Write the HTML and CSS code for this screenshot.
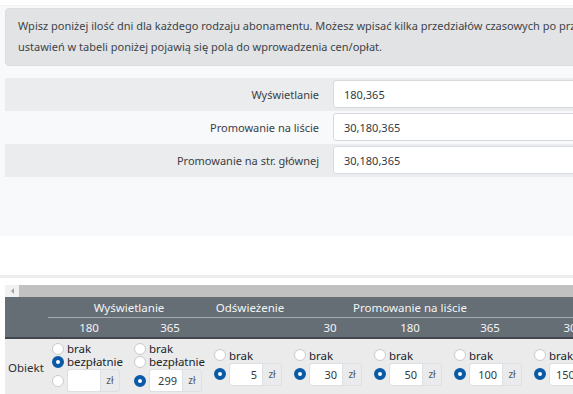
FILE: index.html
```html
<!DOCTYPE html>
<html lang="pl">
<head>
<meta charset="utf-8">
<title>Abonamenty</title>
<link rel="stylesheet" href="styles.css">
</head>
<body>
<div class="page">
  <section class="panel">
    <div class="alert">Wpisz poniżej ilość dni dla każdego rodzaju abonamentu. Możesz wpisać kilka przedziałów czasowych po przecinku. Po zapisaniu<br>ustawień w tabeli poniżej pojawią się pola do wprowadzenia cen/opłat.</div>
    <div class="form">
      <div class="frow stripe"><label class="flabel">Wyświetlanie</label><input class="finput" type="text" value="180,365"></div>
      <div class="frow"><label class="flabel">Promowanie na liście</label><input class="finput" type="text" value="30,180,365"></div>
      <div class="frow stripe"><label class="flabel">Promowanie na str. głównej</label><input class="finput" type="text" value="30,180,365"></div>
    </div>
  </section>
  <div class="spacer"></div>
  <div class="band"></div>
  <div class="scrollbar"><div class="sb-btn"><span class="sb-arrow"></span></div><div class="sb-thumb"></div></div>
  <table class="grid">
    <colgroup>
      <col class="c-name"><col class="c-first"><col class="c-std"><col class="c-std"><col class="c-std"><col class="c-std"><col class="c-std"><col class="c-std"><col class="c-std"><col class="c-std">
    </colgroup>
    <thead>
      <tr class="h1">
        <th class="corner" rowspan="2"></th>
        <th colspan="2">Wyświetlanie</th>
        <th>Odświeżenie</th>
        <th colspan="3">Promowanie na liście</th>
        <th colspan="3">Promowanie na str. głównej</th>
      </tr>
      <tr class="h2">
        <th>180</th><th>365</th><th></th><th>30</th><th>180</th><th>365</th><th>30</th><th>180</th><th>365</th>
      </tr>
    </thead>
    <tbody>
      <tr>
        <td class="name">Obiekt</td>
        <td>
          <div class="opt"><span class="radio"></span><span>brak</span></div>
          <div class="opt"><span class="radio on"></span><span>bezpłatnie</span></div>
          <div class="opt"><span class="radio"></span><span class="igroup"><input class="price" type="text" value=""><span class="unit">zł</span></span></div>
        </td>
        <td>
          <div class="opt"><span class="radio"></span><span>brak</span></div>
          <div class="opt"><span class="radio"></span><span>bezpłatnie</span></div>
          <div class="opt"><span class="radio on"></span><span class="igroup"><input class="price" type="text" value="299"><span class="unit">zł</span></span></div>
        </td>
        <td>
          <div class="opt"><span class="radio"></span><span>brak</span></div>
          <div class="opt"><span class="radio on"></span><span class="igroup"><input class="price" type="text" value="5"><span class="unit">zł</span></span></div>
        </td>
        <td>
          <div class="opt"><span class="radio"></span><span>brak</span></div>
          <div class="opt"><span class="radio on"></span><span class="igroup"><input class="price" type="text" value="30"><span class="unit">zł</span></span></div>
        </td>
        <td>
          <div class="opt"><span class="radio"></span><span>brak</span></div>
          <div class="opt"><span class="radio on"></span><span class="igroup"><input class="price" type="text" value="50"><span class="unit">zł</span></span></div>
        </td>
        <td>
          <div class="opt"><span class="radio"></span><span>brak</span></div>
          <div class="opt"><span class="radio on"></span><span class="igroup"><input class="price" type="text" value="100"><span class="unit">zł</span></span></div>
        </td>
        <td>
          <div class="opt"><span class="radio"></span><span>brak</span></div>
          <div class="opt"><span class="radio on"></span><span class="igroup"><input class="price-left" type="text" value="150"><span class="unit">zł</span></span></div>
        </td>
        <td>
          <div class="opt"><span class="radio"></span><span>brak</span></div>
          <div class="opt"><span class="radio on"></span><span class="igroup"><input class="price" type="text" value="250"><span class="unit">zł</span></span></div>
        </td>
        <td>
          <div class="opt"><span class="radio"></span><span>brak</span></div>
          <div class="opt"><span class="radio on"></span><span class="igroup"><input class="price" type="text" value="400"><span class="unit">zł</span></span></div>
        </td>
      </tr>
    </tbody>
  </table>
</div>
</body>
</html>
```

FILE: styles.css
```css
html, body {
  margin: 0;
  padding: 0;
  overflow: hidden;
  background: #ffffff;
}
body {
  font-family: "Noto Sans", "Open Sans", sans-serif;
  font-size: 11px;
  color: #212529;
}
.page {
  width: 1100px;
}
.panel {
  margin-top: 5px;
  height: 231px;
  box-sizing: border-box;
  padding: 2px 0 0 5px;
  background: #f8f9fa;
  border-top: 1px solid #f0f1f3;
}
.alert {
  background: #e2e3e5;
  border: 1px solid #dcdde0;
  border-radius: 4px;
  padding: 6px 12px 8px;
  line-height: 21px;
  color: #3e4348;
  margin-bottom: 12px;
}
.frow {
  display: grid;
  grid-template-columns: 328px 1fr;
  align-items: center;
  height: 33px;
}
.frow.stripe {
  background: #ebeced;
}
.flabel {
  text-align: right;
  padding-right: 14px;
  color: #3b4046;
}
.finput {
  height: 28px;
  box-sizing: border-box;
  border: 1px solid #d6dadf;
  border-radius: 3px;
  background: #ffffff;
  padding: 0 10px;
  font: inherit;
  color: #343a40;
  margin: 0 0 1px 0;
  outline: none;
}
.spacer {
  height: 39px;
}
.band {
  height: 3px;
  background: #ededee;
}
.scrollbar {
  margin: 7px 0 0 5px;
  height: 12px;
  display: flex;
}
.sb-btn {
  width: 14px;
  background: #f1f1f1;
  display: flex;
  align-items: center;
  justify-content: center;
}
.sb-arrow {
  width: 0;
  height: 0;
  border-top: 3px solid transparent;
  border-bottom: 3px solid transparent;
  border-right: 3px solid #a3a3a3;
}
.sb-thumb {
  flex: 1;
  background: #c1c1c1;
}
.grid {
  margin-left: 5px;
  border-collapse: collapse;
  table-layout: fixed;
  width: 765px;
}
.c-name { width: 43px; }
.c-first { width: 82px; }
.c-std { width: 80px; }
thead th {
  background: #656d75;
  color: #f4f5f6;
  font-weight: normal;
  font-size: 11.5px;
  padding: 0;
  text-align: center;
}
.h1 th {
  height: 20px;
  border-bottom: 1px solid #a5aaaf;
}
.h1 th.corner {
  border-bottom: 2px solid #41474d;
}
.h2 th {
  height: 19px;
  border-bottom: 2px solid #41474d;
}
tbody td {
  background: #ebebeb;
  padding: 3px 0 3px 4px;
  vertical-align: middle;
  height: 50px;
}
tbody td.name {
  padding-left: 3px;
  color: #2b2f33;
  font-size: 11.5px;
}
.opt {
  display: flex;
  align-items: center;
  gap: 3px;
  height: 13px;
  line-height: 13px;
  font-size: 11.5px;
  white-space: nowrap;
}
.opt:has(.igroup) {
  height: 23px;
  margin-top: 1px;
}
.radio {
  width: 12px;
  height: 12px;
  box-sizing: border-box;
  border-radius: 50%;
  background: #ffffff;
  border: 1px solid #c9cbcd;
  flex: none;
}
.radio.on {
  border: 4px solid #0a5aa7;
}
.igroup {
  display: flex;
  height: 23px;
}
.price, .price-left {
  width: 33px;
  height: 23px;
  box-sizing: border-box;
  border: 1px solid #dde0e3;
  border-right: none;
  border-radius: 3px 0 0 3px;
  background: #ffffff;
  font: inherit;
  font-size: 11px;
  color: #343a40;
  text-align: right;
  padding: 0 5px 0 2px;
  margin: 0;
  outline: none;
}
.price-left {
  text-align: left;
  padding-left: 6px;
}
.unit {
  width: 20px;
  box-sizing: border-box;
  border: 1px solid #dde0e3;
  border-radius: 0 3px 3px 0;
  background: #e9ebed;
  font-size: 10px;
  color: #555b61;
  display: flex;
  align-items: center;
  justify-content: center;
}
```
